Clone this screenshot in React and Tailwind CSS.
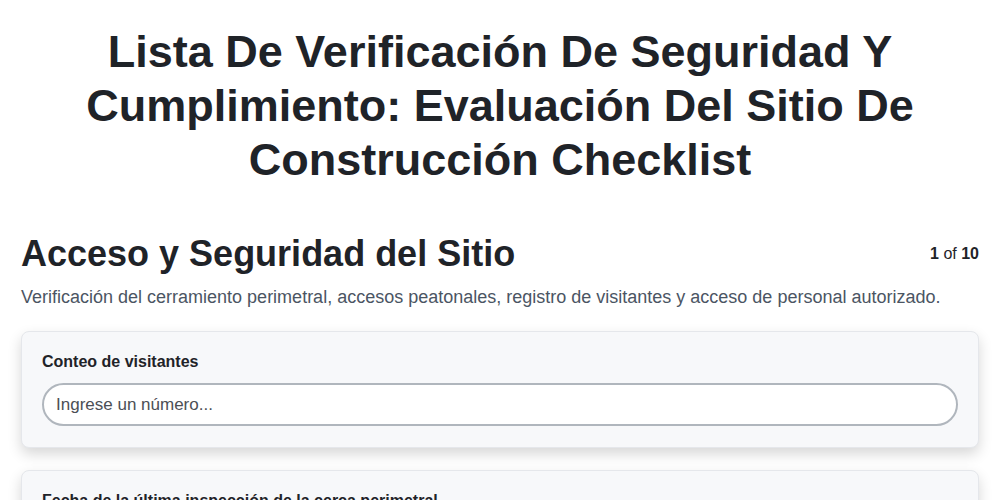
import React from 'react';

const Field = ({ label, placeholder, type = 'text' }) => (
  <div className="bg-[#f7f8fa] border border-[#e5e7eb] rounded-lg shadow-[0_6px_14px_rgba(0,0,0,0.16)] px-5 pt-[20px] pb-[21px]">
    <label className="block text-[16px] leading-[20px] font-bold text-[#1f2328] mb-[11px]">{label}</label>
    <input
      type={type}
      placeholder={placeholder}
      className="w-full h-[43px] rounded-[22px] border-2 border-[#b0b6bd] bg-white px-3 text-[17px] text-[#1f2328] placeholder:text-[#4b4f55] outline-none"
    />
  </div>
);

export default function App() {
  return (
    <div className="min-h-screen bg-white font-['Liberation_Sans',Arial,sans-serif] text-[#1f2328] px-[21px]">
      <h1 className="text-center font-bold text-[45px] leading-[54px] pt-[25px] px-12">
        Lista De Verificación De Seguridad Y Cumplimiento: Evaluación Del Sitio De Construcción Checklist
      </h1>

      <div className="mt-[45px] flex items-center justify-between">
        <h2 className="text-[36px] font-bold leading-[44px]">Acceso y Seguridad del Sitio</h2>
        <div className="text-[16px]">
          <span className="font-bold">1</span> of <span className="font-bold">10</span>
        </div>
      </div>
      <p className="mt-[8px] text-[18px] leading-[26px] text-[#4b5563]">
        Verificación del cerramiento perimetral, accesos peatonales, registro de visitantes y acceso de personal autorizado.
      </p>

      <div className="mt-[21px] flex flex-col gap-[22px] pb-10">
        <Field label="Conteo de visitantes" placeholder="Ingrese un número..." type="number" />
        <Field label="Fecha de la última inspección de la cerca perimetral" placeholder="dd/mm/aaaa" type="text" />
      </div>
    </div>
  );
}
